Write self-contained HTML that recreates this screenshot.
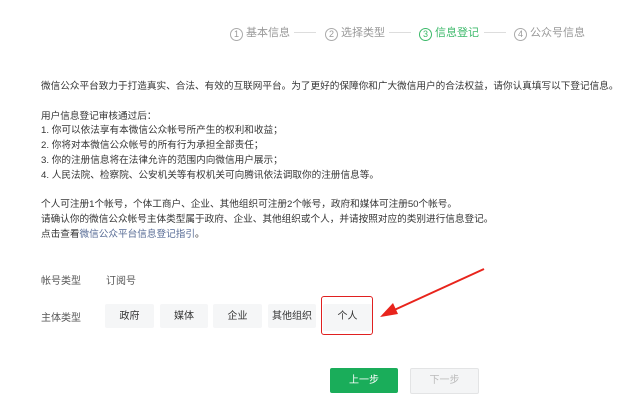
<!DOCTYPE html>
<html><head><meta charset="utf-8"><style>
body{margin:0;width:640px;height:409px;background:#fff;font-family:"Liberation Sans","Noto Sans CJK SC",sans-serif;color:#333;position:relative;overflow:hidden}
.a{position:absolute;white-space:nowrap}
.st{font-size:11px;color:#999;top:24px}
.st b{font-weight:normal;display:inline-block;width:11px;height:11px;border:1px solid #aaa;border-radius:50%;font-size:9px;line-height:11px;text-align:center;margin-right:3px;vertical-align:-1px}
.ln{position:absolute;top:32px;height:1px;width:22px;background:#ddd}
.tx{left:41px;top:80px;font-size:9.65px;line-height:14.8px;color:#353535}
.btn{position:absolute;top:304px;height:24px;background:#f5f6f7;border-radius:2px;font-size:10px;line-height:26px;text-align:center;color:#333}
</style></head><body>
<div class="a st" style="left:230px"><b>1</b>基本信息</div>
<div class="ln" style="left:294px"></div>
<div class="a st" style="left:325px"><b>2</b>选择类型</div>
<div class="ln" style="left:389px"></div>
<div class="a st" style="left:419px;color:#3cb96a"><b style="border-color:#3cb96a">3</b>信息登记</div>
<div class="ln" style="left:484px"></div>
<div class="a st" style="left:514px"><b>4</b>公众号信息</div>
<div class="a tx">微信公众平台致力于打造真实、合法、有效的互联网平台。为了更好的保障你和广大微信用户的合法权益，请你认真填写以下登记信息。<br><br>用户信息登记审核通过后：<br>1. 你可以依法享有本微信公众帐号所产生的权利和收益；<br>2. 你将对本微信公众帐号的所有行为承担全部责任；<br>3. 你的注册信息将在法律允许的范围内向微信用户展示；<br>4. 人民法院、检察院、公安机关等有权机关可向腾讯依法调取你的注册信息等。<br><br>个人可注册1个帐号，个体工商户、企业、其他组织可注册2个帐号，政府和媒体可注册50个帐号。<br>请确认你的微信公众帐号主体类型属于政府、企业、其他组织或个人，并请按照对应的类别进行信息登记。<br>点击查看<span style="color:#576b95">微信公众平台信息登记指引</span>。</div>
<div class="a" style="left:41px;top:272px;font-size:10px;color:#555">帐号类型</div>
<div class="a" style="left:106px;top:272px;font-size:10px;color:#555">订阅号</div>
<div class="a" style="left:41px;top:309px;font-size:10px;color:#555">主体类型</div>
<div class="btn" style="left:105px;width:49px">政府</div>
<div class="btn" style="left:160px;width:48px">媒体</div>
<div class="btn" style="left:213px;width:49px">企业</div>
<div class="btn" style="left:268px;width:48px">其他组织</div>
<div class="btn" style="left:323px;width:49px;height:27px">个人</div>
<div style="position:absolute;left:321px;top:296px;width:50px;height:37px;border:1.5px solid #e02020;border-radius:3px"></div>
<svg style="position:absolute;left:0;top:0" width="640" height="409"><line x1="484" y1="269" x2="392" y2="311" stroke="#e8241c" stroke-width="2"/><polygon points="380,317 393,303 398,314" fill="#e8241c"/></svg>
<div style="position:absolute;left:330px;top:368px;width:68px;height:25px;background:#1aad5a;border-radius:2px;color:#fff;font-size:10px;line-height:25px;text-align:center">上一步</div>
<div style="position:absolute;left:410px;top:368px;width:67px;height:24px;background:#f4f5f6;border:1px solid #e3e4e5;border-radius:2px;color:#bbb;font-size:10px;line-height:24px;text-align:center">下一步</div>
</body></html>
